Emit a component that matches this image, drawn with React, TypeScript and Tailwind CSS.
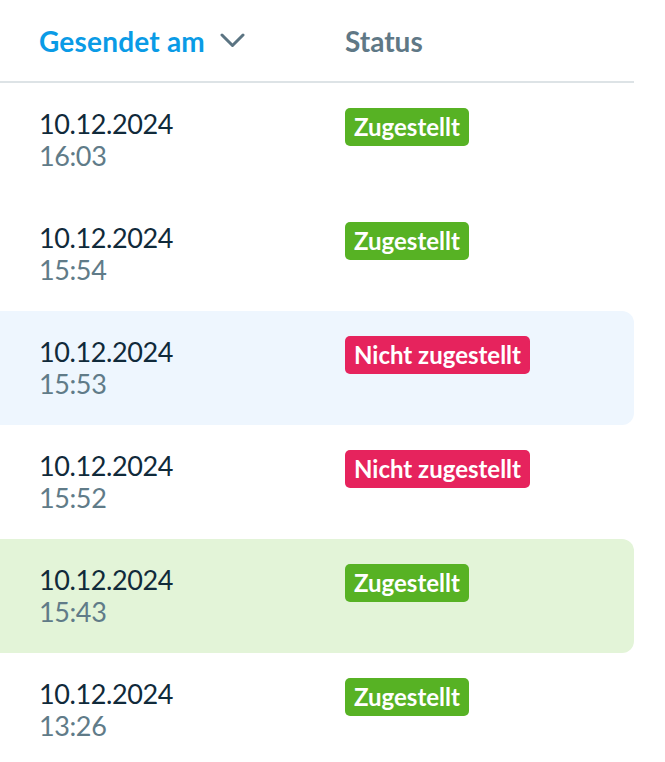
import React from "react";

type Row = {
  date: string;
  time: string;
  delivered: boolean;
  tone?: "blue" | "green";
};

const rows: Row[] = [
  { date: "10.12.2024", time: "16:03", delivered: true },
  { date: "10.12.2024", time: "15:54", delivered: true },
  { date: "10.12.2024", time: "15:53", delivered: false, tone: "blue" },
  { date: "10.12.2024", time: "15:52", delivered: false },
  { date: "10.12.2024", time: "15:43", delivered: true, tone: "green" },
  { date: "10.12.2024", time: "13:26", delivered: true },
];

const ChevronDown = () => (
  <svg width="25" height="15" viewBox="0 0 25 15" fill="none" stroke="#5b7482" strokeWidth="3" strokeLinecap="round" strokeLinejoin="round">
    <polyline points="2,2 12.5,12.5 23,2" />
  </svg>
);

const StatusBadge = ({ delivered }: { delivered: boolean }) => (
  <span
    className={
      "inline-flex h-[38px] items-center rounded-[5px] px-[9px] text-[24px] font-bold leading-none text-white " +
      (delivered ? "bg-[#57b224]" : "bg-[#e6235d]")
    }
  >
    {delivered ? "Zugestellt" : "Nicht zugestellt"}
  </span>
);

export default function App() {
  return (
    <div className="min-h-screen bg-white font-['Lato','Noto_Sans',sans-serif]">
      <div className="w-[634px]">
        <div className="flex h-[83px] items-center border-b-2 border-[#dde3e6] pl-[39px]">
          <div className="flex w-[306px] items-center gap-[15px]">
            <span className="text-[28px] font-bold tracking-[0.2px] text-[#0a9be6]">Gesendet am</span>
            <ChevronDown />
          </div>
          <span className="text-[28px] font-bold text-[#5f7886]">Status</span>
        </div>

        {rows.map((row, i) => (
          <div
            key={i}
            className={
              "flex h-[114px] rounded-r-[12px] pl-[39px] pt-[25px] " +
              (row.tone === "blue" ? "bg-[#eef6fe]" : row.tone === "green" ? "bg-[#e3f4d8]" : "bg-white")
            }
          >
            <div className="flex w-[306px] flex-col text-[27px] leading-[32px] tracking-[-0.4px]">
              <span className="text-[#102a3a]">{row.date}</span>
              <span className="text-[#607b88]">{row.time}</span>
            </div>
            <div>
              <StatusBadge delivered={row.delivered} />
            </div>
          </div>
        ))}
      </div>
    </div>
  );
}
